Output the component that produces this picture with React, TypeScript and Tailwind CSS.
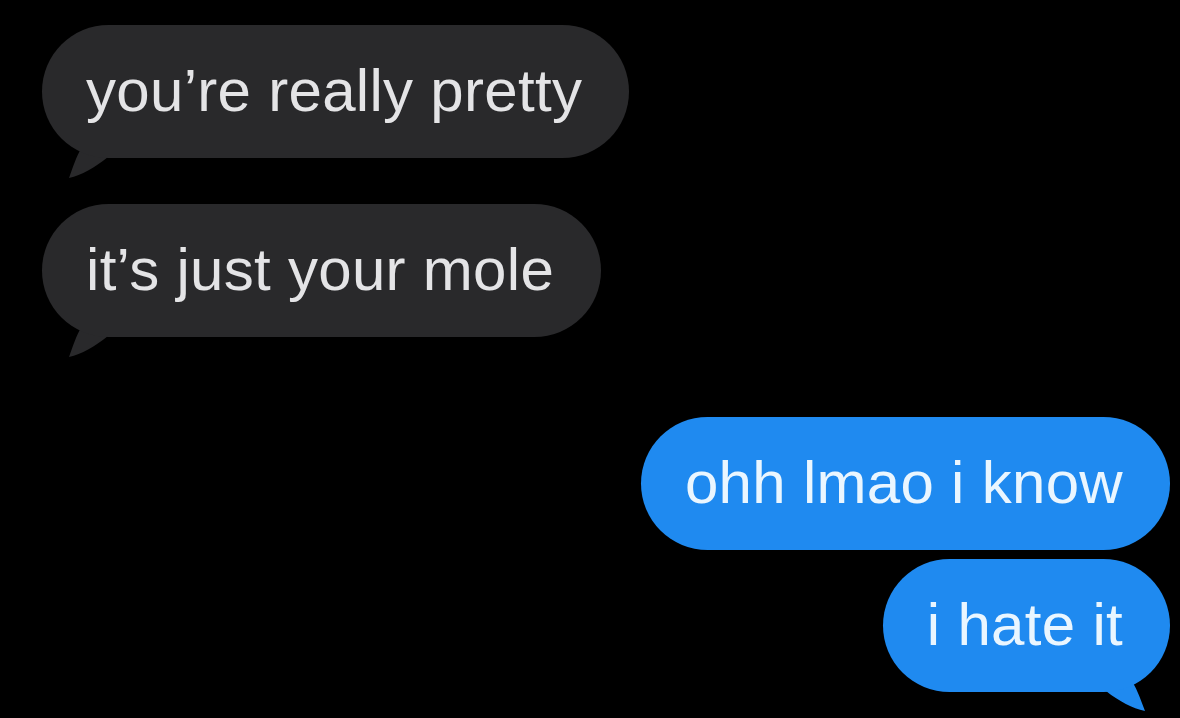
import React from "react";

const font = { fontFamily: '"Liberation Sans", Arial, sans-serif' };

function LeftTail() {
  return (
    <svg
      className="absolute left-0 top-0 pointer-events-none"
      width="120"
      height="160"
      viewBox="0 0 120 160"
      fill="#29292b"
    >
      <path d="M40 122 C34 132 31 142 27 153 C40 150 52 143 66 132 Z" />
    </svg>
  );
}

function RightTail() {
  return (
    <svg
      className="absolute right-0 top-0 pointer-events-none"
      width="120"
      height="160"
      viewBox="0 0 120 160"
      fill="#1f8af0"
    >
      <path d="M82 122 C88 132 91 142 95 152 C82 149 70 143 56 132 Z" />
    </svg>
  );
}

function Bubble({
  text,
  side,
  tail,
}: {
  text: string;
  side: "left" | "right";
  tail?: boolean;
}) {
  const isLeft = side === "left";
  return (
    <div className="relative">
      {tail && (isLeft ? <LeftTail /> : <RightTail />)}
      <div
        className={
          "relative flex h-[133px] items-center rounded-full pl-[44px] pr-[47px] text-[60px] leading-none tracking-[0.3px] " +
          (isLeft ? "bg-[#29292b] text-[#e4e4e6]" : "bg-[#1f8af0] text-[#eaf6ff]")
        }
        style={font}
      >
        <span className="whitespace-nowrap pb-[2px]">{text}</span>
      </div>
    </div>
  );
}

export default function App() {
  return (
    <div className="h-[718px] w-full overflow-hidden bg-black">
      <div className="flex flex-col pl-[42px] pr-[10px] pt-[25px]">
        <div className="flex flex-col items-start gap-[46px]">
          <Bubble text="you’re really pretty" side="left" tail />
          <Bubble text="it’s just your mole" side="left" tail />
        </div>
        <div className="mt-[80px] flex flex-col items-end gap-[9px]">
          <Bubble text="ohh lmao i know" side="right" />
          <Bubble text="i hate it" side="right" tail />
        </div>
      </div>
    </div>
  );
}
